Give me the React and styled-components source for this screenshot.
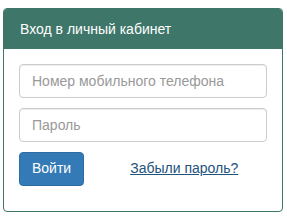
import styled, { createGlobalStyle } from "styled-components";

const Global = createGlobalStyle`
    html, body {
        margin: 0;
        background: #fff;
        font-family: "Liberation Sans", Arial, sans-serif;
        font-size: 14px;
        line-height: 1.42857;
        color: #333;
    }
    * { box-sizing: border-box; }
`

const Page = styled.div`
    padding: 8px 4px 6px 3px;
`
const Panel = styled.div`
    border: 1px solid #3e7669;
    border-radius: 4px;
    background: #fff;
    overflow: hidden;
`
const Heading = styled.div`
    background: #3e7669;
    color: #fff;
    padding: 10px 15px 10px 16px;
    font-size: 14px;
    line-height: 20px;
`
const Body = styled.form`
    padding: 15px 15px 15px;
    display: flex;
    flex-direction: column;
    gap: 10px;
`
const Input = styled.input`
    display: block;
    width: 100%;
    height: 34px;
    padding: 6px 12px;
    font: inherit;
    font-size: 14px;
    color: #555;
    border: 1px solid #ccc;
    border-radius: 4px;
    box-shadow: inset 0 1px 1px rgba(0,0,0,.075);
    outline: none;
    &::placeholder { color: #999; }
`
const Actions = styled.div`
    display: flex;
    align-items: center;
    gap: 46px;
    margin-bottom: 10px;
`
const Button = styled.button`
    height: 34px;
    padding: 6px 12px;
    font: inherit;
    font-size: 14px;
    color: #fff;
    background: #337ab7;
    border: 1px solid #2e6da4;
    border-radius: 4px;
`
const Link = styled.a`
    color: #23527c;
    text-decoration: underline;
    font-size: 14px;
`

const App = () => {
    return(
        <Page>
            <Global />
            <Panel>
                <Heading>Вход в личный кабинет</Heading>
                <Body onSubmit={e => e.preventDefault()}>
                    <Input type="text" placeholder="Номер мобильного телефона" />
                    <Input type="password" placeholder="Пароль" />
                    <Actions>
                        <Button type="submit">Войти</Button>
                        <Link href="#">Забыли пароль?</Link>
                    </Actions>
                </Body>
            </Panel>
        </Page>
    )
}

export default App;
